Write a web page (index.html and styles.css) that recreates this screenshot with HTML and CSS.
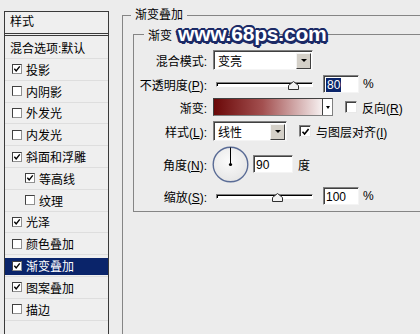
FILE: index.html
```html
<!DOCTYPE html>
<html lang="zh">
<head>
<meta charset="utf-8">
<link rel="stylesheet" href="styles.css">
</head>
<body>
<div class="dialog">
  <div class="styles-list">
    <div class="head">样式</div>
    <div class="item blend">混合选项:默认</div>
    <div class="item"><span class="cb"><svg viewBox="0 0 9 9"><path d="M1.5 4.2 L3.6 6.6 L7.6 1.6"/></svg></span>投影</div>
    <div class="item"><span class="cb"></span>内阴影</div>
    <div class="item"><span class="cb"></span>外发光</div>
    <div class="item"><span class="cb"></span>内发光</div>
    <div class="item"><span class="cb"><svg viewBox="0 0 9 9"><path d="M1.5 4.2 L3.6 6.6 L7.6 1.6"/></svg></span>斜面和浮雕</div>
    <div class="item sub"><span class="cb"><svg viewBox="0 0 9 9"><path d="M1.5 4.2 L3.6 6.6 L7.6 1.6"/></svg></span>等高线</div>
    <div class="item sub"><span class="cb"></span>纹理</div>
    <div class="item"><span class="cb"><svg viewBox="0 0 9 9"><path d="M1.5 4.2 L3.6 6.6 L7.6 1.6"/></svg></span>光泽</div>
    <div class="item"><span class="cb"></span>颜色叠加</div>
    <div class="item selected"><span class="cb"><svg viewBox="0 0 9 9"><path d="M1.5 4.2 L3.6 6.6 L7.6 1.6"/></svg></span>渐变叠加</div>
    <div class="item"><span class="cb"><svg viewBox="0 0 9 9"><path d="M1.5 4.2 L3.6 6.6 L7.6 1.6"/></svg></span>图案叠加</div>
    <div class="item"><span class="cb"></span>描边</div>
  </div>

  <fieldset class="outer">
    <legend>渐变叠加</legend>
    <fieldset class="inner">
      <legend>渐变</legend>
      <div class="form">
        <div class="lbl">混合模式:</div>
        <div class="ctl">
          <div class="select mode"><span class="val">变亮</span><span class="btn"><i class="tri"></i></span></div>
        </div>

        <div class="lbl">不透明度(<u>P</u>):</div>
        <div class="ctl">
          <div class="slider"><div class="track"></div><svg class="thumb op" viewBox="0 0 11 9"><path d="M5.5 0.5 L10.5 4.5 L10.5 8.5 L0.5 8.5 L0.5 4.5 Z"/></svg></div>
          <div class="field num"><span class="sel">80</span></div>
          <span class="unit">%</span>
        </div>

        <div class="lbl">渐变:</div>
        <div class="ctl">
          <div class="grad"><div class="grad-fill"></div><div class="grad-btn"><i class="tri small"></i></div></div>
          <span class="cb big"></span>
          <span class="opt">反向(<u>R</u>)</span>
        </div>

        <div class="lbl">样式(<u>L</u>):</div>
        <div class="ctl">
          <div class="select style"><span class="val">线性</span><span class="btn"><i class="tri"></i></span></div>
          <span class="cb big align"><svg viewBox="0 0 9 9"><path d="M1.5 4.2 L3.6 6.6 L7.6 1.6"/></svg></span>
          <span class="opt">与图层对齐(<u>I</u>)</span>
        </div>

        <div class="lbl">角度(<u>N</u>):</div>
        <div class="ctl">
          <svg class="dial" width="37" height="37" viewBox="0 0 37 37">
            <defs>
              <radialGradient id="dg" cx="45%" cy="40%" r="60%">
                <stop offset="0" stop-color="#fbfbfb"/>
                <stop offset="1" stop-color="#e6e6e6"/>
              </radialGradient>
            </defs>
            <circle cx="18.5" cy="18.5" r="17.3" fill="url(#dg)" stroke="#5a6c96" stroke-width="1.4"/>
            <line x1="18.5" y1="18.5" x2="18.5" y2="1.5" stroke="#000" stroke-width="1"/>
            <circle cx="18.5" cy="18.5" r="1.6" fill="#000"/>
          </svg>
          <div class="field angle">90</div>
          <span class="unit deg">度</span>
        </div>

        <div class="lbl">缩放(<u>S</u>):</div>
        <div class="ctl">
          <div class="slider"><div class="track"></div><svg class="thumb sc" viewBox="0 0 11 9"><path d="M5.5 0.5 L10.5 4.5 L10.5 8.5 L0.5 8.5 L0.5 4.5 Z"/></svg></div>
          <div class="field num">100</div>
          <span class="unit">%</span>
        </div>
      </div>
    </fieldset>
  </fieldset>

  <div class="watermark">www.68ps.com</div>
</div>
</body>
</html>
```

FILE: styles.css
```css
html, body {
  margin: 0;
  padding: 0;
}
body {
  width: 420px;
  height: 334px;
  overflow: hidden;
  background: #ececec;
  font-family: "Liberation Sans", "Noto Sans CJK SC", sans-serif;
  font-size: 12px;
  color: #000;
}
.dialog {
  position: relative;
  display: flex;
  align-items: flex-start;
  padding-left: 4px;
  height: 334px;
  box-sizing: border-box;
  overflow: hidden;
}

/* left list */
.styles-list {
  margin-top: 11px;
  width: 105px;
  height: 323px;
  box-sizing: border-box;
  border: 1px solid #3a3a3a;
  border-bottom: none;
  background: #efefef;
  flex: none;
  overflow: hidden;
}
.head {
  height: 21px;
  line-height: 21px;
  padding-left: 5px;
  border-bottom: 3px double #3a3a3a;
}
.item {
  height: 21.8px;
  box-sizing: border-box;
  display: flex;
  align-items: center;
  gap: 4px;
  padding-left: 7px;
  border-bottom: 1px solid #dedede;
  white-space: nowrap;
}
.item.blend {
  height: 23px;
  padding-left: 5px;
}
.item.sub {
  padding-left: 20px;
}
.item.selected {
  background: linear-gradient(#efefef 0 3px, #0a246a 3px calc(100% - 1px), #efefef calc(100% - 1px));
  color: #fff;
}

.cb {
  width: 10px;
  height: 10px;
  box-sizing: border-box;
  border: 1px solid #404040;
  border-right-color: #909090;
  border-bottom-color: #909090;
  background: #fff;
  flex: none;
  display: inline-flex;
}
.cb svg {
  width: 8px;
  height: 8px;
}
.cb path {
  fill: none;
  stroke: #000;
  stroke-width: 1.6;
}
.cb.big {
  width: 12px;
  height: 12px;
  border-color: #808080 #e8e8e8 #e8e8e8 #808080;
  box-shadow: inset 1px 1px 0 #404040;
}
.cb.big svg {
  width: 10px;
  height: 10px;
  margin: 1px 0 0 1px;
}

/* group boxes */
fieldset {
  margin: 0;
  border: 1px solid #858585;
  min-width: 0;
}
legend {
  line-height: 16px;
  padding: 0 4px;
}
.outer {
  margin: 7px 0 0 13px;
  padding: 2px 0 0 8px;
  width: 298px;
  height: 327px;
  flex: none;
  box-sizing: border-box;
  border-right: none;
  border-bottom: none;
}
.inner {
  margin: 0 0 0 2px;
  padding: 6px 0 6px 3px;
  width: 287px;
  box-sizing: border-box;
  border-right: none;
}
.inner legend {
  margin-left: 7px;
  padding-top: 3px;
}

.form {
  display: grid;
  grid-template-columns: 70px auto;
  grid-template-rows: 20px 18px 18px 20px 36px 18px;
  column-gap: 6px;
  row-gap: 5px;
  align-items: center;
}
.lbl {
  text-align: right;
  white-space: nowrap;
}
.lbl u, .opt u {
  text-decoration: underline;
  text-underline-offset: 1px;
}
.ctl {
  display: flex;
  align-items: center;
  white-space: nowrap;
}

/* select */
.select {
  display: flex;
  align-items: center;
  height: 20px;
  box-sizing: border-box;
  border: 1px solid;
  border-color: #808080 #f4f4f4 #f4f4f4 #808080;
  box-shadow: inset 1px 1px 0 #404040;
  background: #fff;
}
.select.mode { width: 100px; }
.select.style { width: 74px; }
.select .val {
  padding-left: 4px;
  flex: 1;
}
.btn {
  width: 15px;
  height: 16px;
  box-sizing: border-box;
  margin-right: 1px;
  margin-top: 1px;
  background: #d4d0c8;
  border: 1px solid;
  border-color: #f4f4f4 #404040 #404040 #f4f4f4;
  display: flex;
  align-items: center;
  justify-content: center;
}
.tri {
  width: 0;
  height: 0;
  border-left: 3px solid transparent;
  border-right: 3px solid transparent;
  border-top: 3px solid #000;
}
.tri.small {
  border-left-width: 2.5px;
  border-right-width: 2.5px;
}

/* slider */
.slider {
  position: relative;
  width: 97px;
  height: 18px;
  margin-left: 3px;
  display: flex;
  align-items: center;
}
.track {
  width: 100%;
  height: 5px;
  box-sizing: border-box;
  border: 1px solid;
  border-color: #808080 #fff #fff #808080;
  box-shadow: inset 1px 1px 0 #000;
  background: #fff;
}
.thumb {
  position: absolute;
  width: 11px;
  height: 9px;
  top: 6px;
}
.thumb path {
  fill: #f2f2f2;
  stroke: #303030;
  stroke-width: 1;
}
.thumb.op { left: calc(79% - 5px); }
.thumb.sc { left: calc(63% - 5px); }

/* fields */
.field {
  height: 18px;
  box-sizing: border-box;
  border: 1px solid;
  border-color: #808080 #f4f4f4 #f4f4f4 #808080;
  box-shadow: inset 1px 1px 0 #404040;
  background: #fff;
  padding: 2px 0 0 2px;
  line-height: 14px;
}
.field.num {
  width: 36px;
  margin-left: 10px;
}
.field.angle {
  width: 40px;
  margin-left: 4px;
}
.sel {
  display: inline-block;
  background: #0a246a;
  color: #fff;
  padding: 0 1px;
}
.unit {
  margin-left: 4px;
}
.unit.deg {
  margin-left: 5px;
}

/* gradient */
.grad {
  display: flex;
  width: 120px;
  height: 18px;
  box-sizing: border-box;
  border: 1px solid;
  border-color: #404040 #808080 #808080 #404040;
  background: #fff;
}
.grad-fill {
  flex: 1;
  background: linear-gradient(to right, #6a0808, #a35050 45%, #f6f0f0);
}
.grad-btn {
  width: 9px;
  border-left: 1px solid #404040;
  background: #fff;
  display: flex;
  align-items: center;
  justify-content: center;
}
.grad + .cb.big {
  margin-left: 12px;
}
.cb.align {
  margin-left: 12px;
}
.opt {
  margin-left: 5px;
}

.dial {
  margin-left: -1px;
  flex: none;
}

/* watermark overlay */
.watermark {
  position: absolute;
  left: 178px;
  top: 23px;
  font-family: "Liberation Sans", sans-serif;
  font-weight: bold;
  font-size: 21px;
  line-height: 21px;
  letter-spacing: -0.2px;
  color: #fff;
  text-shadow:
    2px 0 0 #1b2a66, -2px 0 0 #1b2a66, 0 2px 0 #1b2a66, 0 -2px 0 #1b2a66,
    1.5px 1.5px 0 #1b2a66, -1.5px 1.5px 0 #1b2a66, 1.5px -1.5px 0 #1b2a66, -1.5px -1.5px 0 #1b2a66,
    2.5px 1px 0 #1b2a66, -2.5px 1px 0 #1b2a66, 1px 2.5px 0 #1b2a66, 1px -2.5px 0 #1b2a66;
}
```
